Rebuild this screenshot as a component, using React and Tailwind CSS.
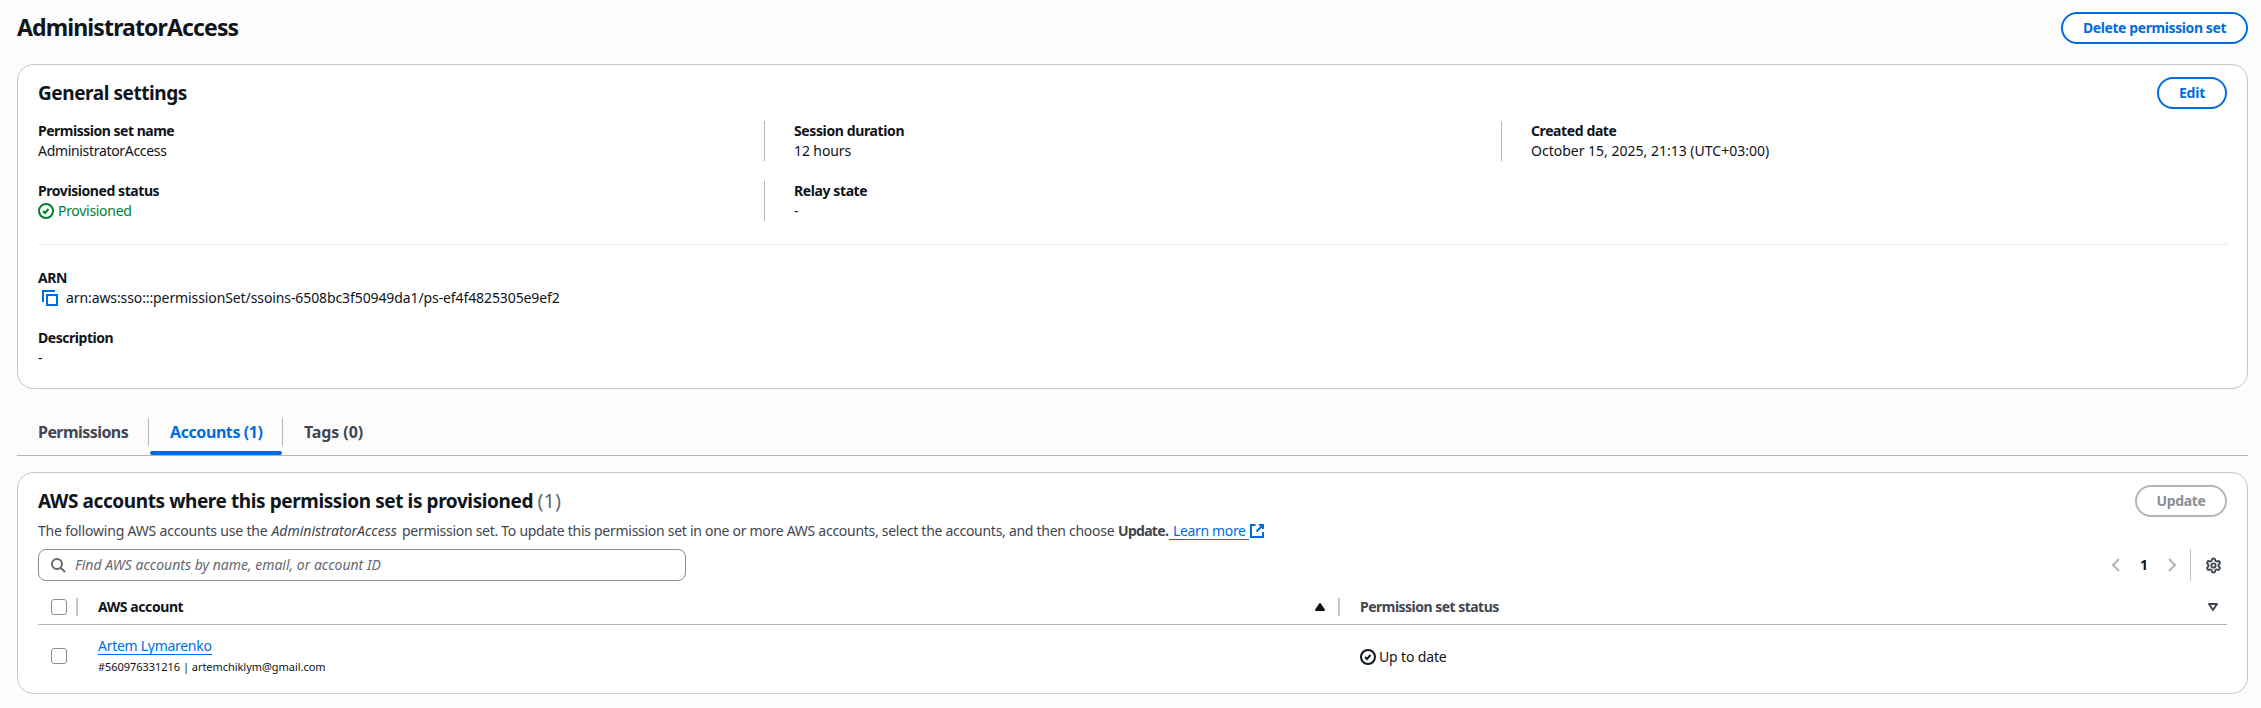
import React from "react";
import { Settings } from "lucide-react";

const Icon = ({ className = "", children }) => (
  <svg viewBox="0 0 16 16" className={"size-4 shrink-0 fill-none stroke-current stroke-2 " + className}>
    {children}
  </svg>
);

const CheckCircle = () => (
  <Icon>
    <circle cx="8" cy="8" r="7" />
    <path d="m5 8 2 2 3.5-4" />
  </Icon>
);

const Button = ({ className, children }) => (
  <button className={"h-8 rounded-full border-2 bg-white text-center font-bold leading-7 whitespace-nowrap " + className}>
    {children}
  </button>
);

const Field = ({ label, labelClass, divided, children }) => (
  <div className={"h-10 " + (divided ? "border-l border-[#b4b4bb] pl-[29px]" : "")}>
    <div className={"font-bold " + labelClass}>{label}</div>
    <div className="flex">{children}</div>
  </div>
);

const Checkbox = () => <span className="block size-4 shrink-0 rounded-[3px] border border-[#8c8c94] bg-white" />;

export default function App() {
  return (
    <div className="h-[708px] w-[2261px] overflow-hidden bg-[#fcfcfd] pt-3 pr-[13px] pl-[17px] font-['Noto_Sans',sans-serif] text-sm leading-5 text-[#0f141a]">
      <header className="flex h-8 items-center justify-between">
        <h1 className="pb-[2px] text-[23px] leading-[30px] font-bold tracking-[-0.87px]">AdministratorAccess</h1>
        <Button className="w-[187px] border-[#006ce0] tracking-[-0.41px] text-[#006ce0]">Delete permission set</Button>
      </header>

      <section className="mt-5 h-[325px] rounded-2xl border border-[#c6c6cd] bg-white px-5 pt-3">
        <div className="flex h-8 items-center justify-between">
          <h2 className="text-[19px] leading-6 font-bold tracking-[-0.43px]">General settings</h2>
          <Button className="w-[70px] border-[#006ce0] tracking-[-0.2px] text-[#006ce0]">Edit</Button>
        </div>
        <div className="mt-3 grid grid-cols-[726px_737px_1fr] gap-y-5">
          <Field label="Permission set name" labelClass="tracking-[-0.49px]">
            <span className="tracking-[-0.32px]">AdministratorAccess</span>
          </Field>
          <Field label="Session duration" labelClass="tracking-[-0.38px]" divided>
            <span className="tracking-[-0.1px]">12 hours</span>
          </Field>
          <Field label="Created date" labelClass="tracking-[-0.4px]" divided>
            October 15, 2025, 21:13 (UTC+03:00)
          </Field>
          <Field label="Provisioned status" labelClass="tracking-[-0.43px]">
            <span className="flex items-center gap-1 tracking-[-0.3px] text-[#00802f]">
              <CheckCircle />
              Provisioned
            </span>
          </Field>
          <Field label="Relay state" labelClass="tracking-[-0.4px]" divided>
            -
          </Field>
        </div>
        <div className="mt-[23px] border-t border-[#ebebf0] pt-[23px]">
          <Field label="ARN" labelClass="tracking-[-0.4px]">
            <Icon className="mt-0.5 mr-2 ml-1 text-[#006ce0]">
              <path d="M15 5H5v10h10V5ZM13 1H1v11" />
            </Icon>
            <span className="tracking-[-0.1px]">arn:aws:sso:::permissionSet/ssoins-6508bc3f50949da1/ps-ef4f4825305e9ef2</span>
          </Field>
          <div className="mt-5">
            <Field label="Description" labelClass="tracking-[-0.46px]">
              -
            </Field>
          </div>
        </div>
      </section>

      <nav className="mt-[29px] flex h-[38px] border-b border-[#b4b4bb] text-base leading-7 font-bold text-[#424650]">
        <div className="h-7 w-[132px] border-r border-[#b4b4bb] pl-[21px] tracking-[-0.56px]">Permissions</div>
        <div className="ml-px w-[132px] text-[#006ce0]">
          <div className="pl-5 tracking-[-0.42px]">Accounts (1)</div>
          <div className="mt-[5px] h-1 rounded-[2px] bg-[#006ce0]" />
        </div>
        <div className="h-7 border-l border-[#b4b4bb] pl-[21px] tracking-[-0.1px]">Tags (0)</div>
      </nav>

      <section className="mt-4 h-[222px] rounded-2xl border border-[#c6c6cd] bg-white px-5 pt-3">
        <div className="flex h-8 items-center justify-between">
          <h2 className="text-[19px] leading-6 font-bold tracking-[-0.41px]">
            AWS accounts where this permission set is provisioned{" "}
            <span className="text-[20px] font-normal tracking-normal text-[#656871]">(1)</span>
          </h2>
          <Button className="w-[92px] border-[#b4b4bb] tracking-[-0.35px] text-[#8c8c94]">Update</Button>
        </div>
        <p className="mt-1 flex h-5 whitespace-nowrap text-[#424650]">
          <span className="w-[233.5px] tracking-[-0.19px]">The following AWS accounts use the</span>
          <em className="w-[130.5px]">AdministratorAccess</em>
          <span className="w-[716px] tracking-[-0.28px]">
            permission set. To update this permission set in one or more AWS accounts, select the accounts, and then choose
          </span>
          <b className="w-[51px] font-bold tracking-[-0.7px]">Update.</b>
          <a className="h-[19px] w-20 border-b border-[#006ce0] pl-1 tracking-[-0.35px] text-[#006ce0]">Learn more</a>
          <Icon className="mt-0.5 text-[#006ce0]">
            <path d="M10 2h4v4M7.5 8.5 14 2M14 9v5H2V2h4.5" />
          </Icon>
        </p>
        <div className="mt-2 flex h-8 items-center justify-between">
          <div className="flex h-8 w-[648px] items-center gap-[9px] rounded-lg border border-[#8c8c94] bg-white pl-[11px]">
            <Icon className="text-[#656871]">
              <circle cx="7" cy="7" r="5" />
              <path d="m15 15-4.5-4.5" />
            </Icon>
            <span className="text-[#656871] italic">Find AWS accounts by name, email, or account ID</span>
          </div>
          <div className="flex h-8 items-center">
            <Icon className="text-[#b4b4bb]">
              <path d="M11 2 5 8l6 6" />
            </Icon>
            <b className="w-10 text-center font-bold">1</b>
            <Icon className="text-[#b4b4bb]">
              <path d="m5 2 6 6-6 6" />
            </Icon>
            <span className="ml-[10px] h-8 w-px bg-[#c6c6cd]" />
            <Settings className="mr-[5px] ml-[14px] size-[17px] text-[#424650]" strokeWidth={2.7} />
          </div>
        </div>

        <div className="mt-2 flex h-9 items-center border-b border-[#b4b4bb] pl-[13px]">
          <Checkbox />
          <span className="ml-[9px] h-[18px] w-0.5 bg-[#c6c6cd]" />
          <div className="ml-5 flex w-[1240px] items-center justify-between pr-[10px]">
            <span className="font-bold tracking-[-0.42px]">AWS account</span>
            <Icon className="text-[#0f141a]">
              <path className="fill-current" strokeLinejoin="round" d="M4 11h8L8 5l-4 6Z" />
            </Icon>
          </div>
          <span className="h-[18px] w-0.5 bg-[#c6c6cd]" />
          <div className="ml-5 flex flex-1 items-center justify-between pr-[6px] text-[#424650]">
            <span className="font-bold tracking-[-0.52px]">Permission set status</span>
            <Icon>
              <path strokeLinejoin="round" d="M4 5h8l-4 6-4-6Z" />
            </Icon>
          </div>
        </div>
        <div className="flex h-[61px] items-center pl-[13px]">
          <Checkbox />
          <div className="ml-[31px] w-[1262px]">
            <a className="block h-[19px] w-[114px] border-b border-[#006ce0] tracking-[-0.28px] whitespace-nowrap text-[#006ce0]">
              Artem Lymarenko
            </a>
            <div className="mt-1 text-[11px] leading-4 tracking-[-0.04px]">#560976331216 | artemchiklym@gmail.com</div>
          </div>
          <span className="flex items-center gap-[3px] pt-0.5 tracking-[-0.15px]">
            <CheckCircle />
            Up to date
          </span>
        </div>
      </section>
    </div>
  );
}
